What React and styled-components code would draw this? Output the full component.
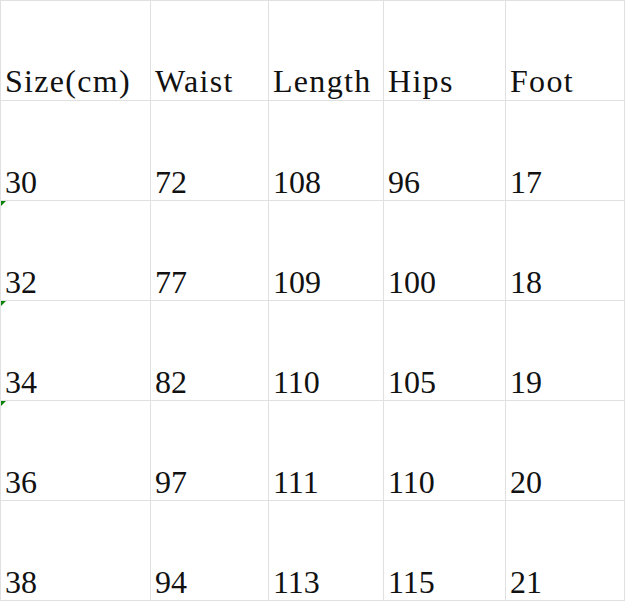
import React from "react";
import styled, { createGlobalStyle } from "styled-components";

const Global = createGlobalStyle`
  html, body { margin: 0; padding: 0; background: #ffffff; }
`;

const COLS = [150, 118, 115, 122, 119];

const Sheet = styled.div`
  display: grid;
  grid-template-columns: ${COLS.map((w) => `${w}px`).join(" ")};
  grid-auto-rows: 100px;
  width: max-content;
  border-top: 1px solid #e0e0e0;
  border-left: 1px solid #e0e0e0;
  font-family: "Liberation Serif", "Times New Roman", serif;
  color: #111;
`;

const Cell = styled.div`
  position: relative;
  box-sizing: border-box;
  border-right: 1px solid #e0e0e0;
  border-bottom: 1px solid #e0e0e0;
  display: flex;
  align-items: flex-end;
  padding: 0 0 ${(p) => (p.$head ? 4 : 3)}px 4px;
  font-size: 32px;
  line-height: 30px;
  letter-spacing: ${(p) => (p.$head ? "1.3px" : "0")};
  white-space: nowrap;
  overflow: hidden;
`;

const Flag = styled.span`
  position: absolute;
  left: 0;
  top: 0;
  width: 0;
  height: 0;
  border-top: 5px solid #0a820a;
  border-right: 5px solid transparent;
`;

const header = ["Size(cm)", "Waist", "Length", "Hips", "Foot"];
const rows = [
  { v: ["30", "72", "108", "96", "17"], flag: false },
  { v: ["32", "77", "109", "100", "18"], flag: true },
  { v: ["34", "82", "110", "105", "19"], flag: true },
  { v: ["36", "97", "111", "110", "20"], flag: true },
  { v: ["38", "94", "113", "115", "21"], flag: false },
];

export default function App() {
  return (
    <>
      <Global />
      <Sheet>
        {header.map((h) => (
          <Cell key={h} $head>
            {h}
          </Cell>
        ))}
        {rows.map((r, i) =>
          r.v.map((c, j) => (
            <Cell key={`${i}-${j}`}>
              {j === 0 && r.flag && <Flag />}
              {c}
            </Cell>
          ))
        )}
      </Sheet>
    </>
  );
}
